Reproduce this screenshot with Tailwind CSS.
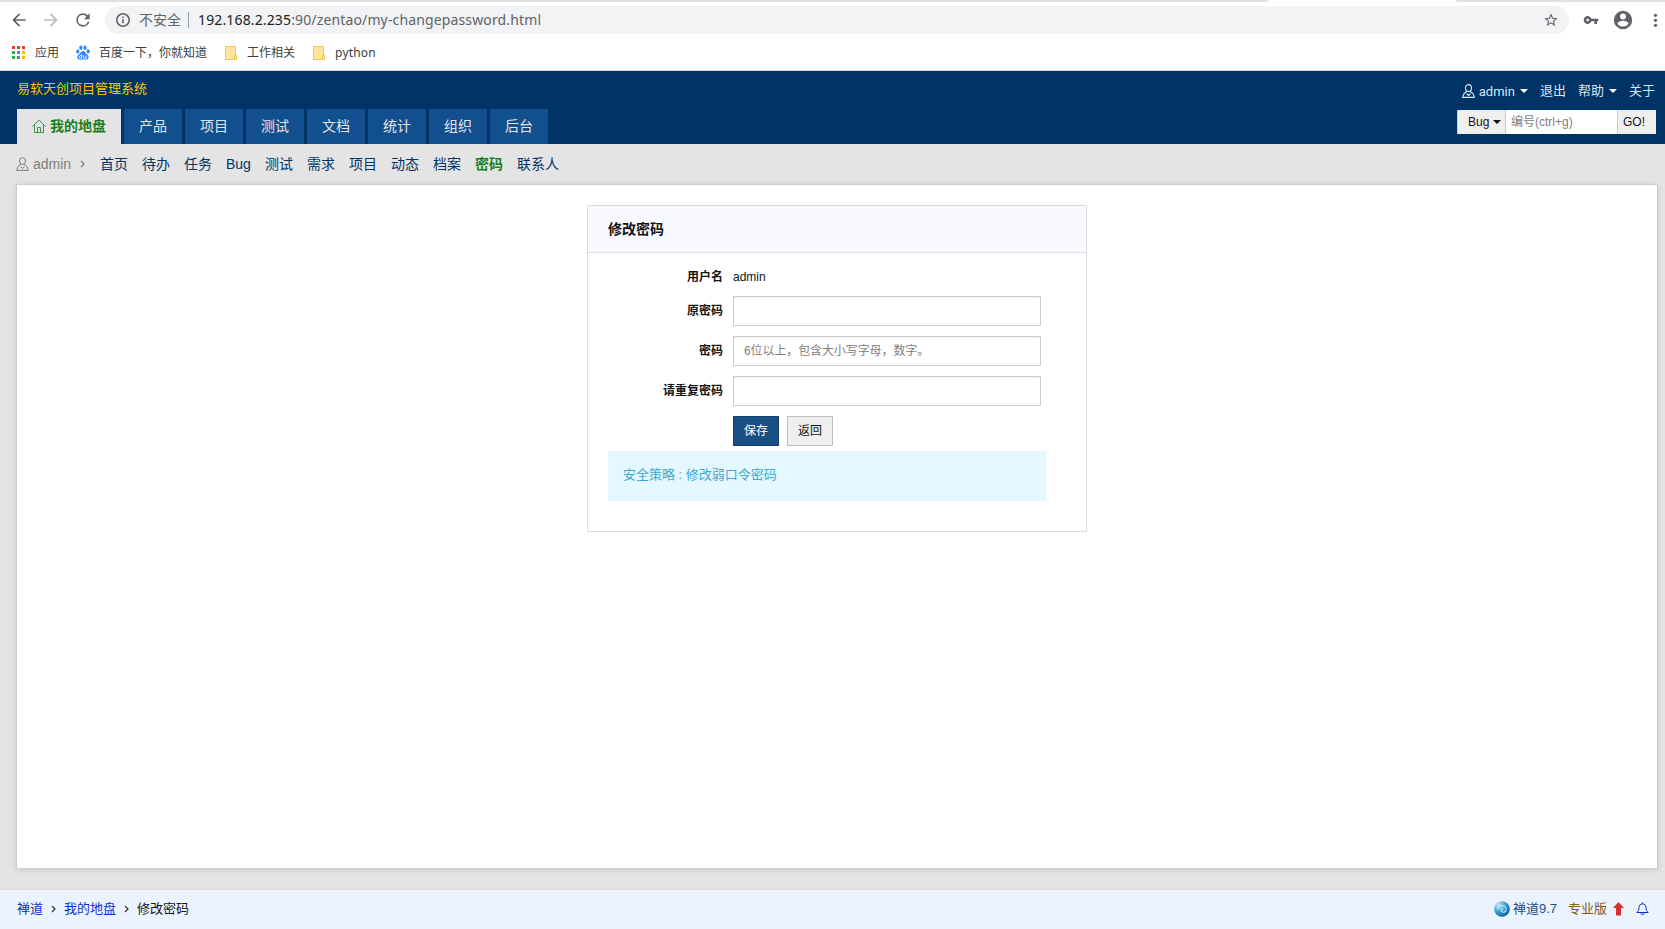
<!DOCTYPE html>
<html lang="zh-CN">
<head>
    <meta charset="UTF-8">
    <meta name="viewport" content="width=device-width, initial-scale=1.0">
    <title>修改密码 - 易软天创项目管理系统</title>
    <script src="https://cdn.jsdelivr.net/npm/@tailwindcss/browser@4"></script>
</head>
<body class="flex flex-col h-screen overflow-hidden bg-[#e4e4e4] text-[#141414] text-[13px] font-['Liberation_Sans','Noto_Sans_CJK_SC',sans-serif]">

    <!-- browser toolbar -->
    <div class="h-[71px] shrink-0 bg-white border-b border-[#d5d8dc] font-['Noto_Sans','Noto_Sans_CJK_SC',sans-serif]">
        <div class="flex h-[2px]">
            <div class="w-[1269px] bg-[#dee1e6] rounded-br-[2px]"></div>
            <div class="w-[187px]"></div>
            <div class="flex-1 bg-[#dee1e6] rounded-bl-[2px]"></div>
        </div>
        <div class="flex items-center h-9 pl-[9px] text-[#5f6368]">
            <svg class="w-5 h-5 mr-3" viewBox="0 0 24 24" fill="currentColor"><path d="M20 11H7.83l5.59-5.59L12 4l-8 8 8 8 1.41-1.41L7.83 13H20z"/></svg>
            <svg class="w-5 h-5 mr-3 text-[#babcbe]" viewBox="0 0 24 24" fill="currentColor"><path d="M12 4l-1.41 1.41L16.17 11H4v2h12.17l-5.58 5.59L12 20l8-8z"/></svg>
            <svg class="w-5 h-5 mr-3" viewBox="0 0 24 24" fill="currentColor"><path d="M17.65 6.35A7.96 7.96 0 0 0 12 4a8 8 0 1 0 7.73 10h-2.08A6 6 0 1 1 12 6c1.66 0 3.14.69 4.22 1.78L13 11h7V4z"/></svg>
            <div class="flex items-center w-[1464px] h-7 pl-[10px] pr-[10px] rounded-full bg-[#f1f3f4]">
                <svg class="w-4 h-4 mr-2" viewBox="0 0 16 16" fill="none" stroke="currentColor" stroke-width="1.6"><circle cx="8" cy="8" r="6.2"/><path d="M8 7.2v4M8 4.4v1.6"/></svg>
                <span class="text-[14px] leading-7">不安全</span>
                <span class="w-px h-4 ml-[7px] mr-[9px] bg-[#9aa0a6]"></span>
                <span class="flex-1 text-[14px] leading-7 tracking-[0.14px] whitespace-nowrap"><span class="text-[#202124]">192.168.2.235</span>:90/zentao/my-changepassword.html</span>
                <svg class="w-4 h-4" viewBox="0 0 24 24" fill="currentColor"><path d="M22 9.24l-7.19-.62L12 2 9.19 8.63 2 9.24l5.46 4.73L5.82 21 12 17.27 18.18 21l-1.63-7.03zM12 15.4l-3.76 2.27 1-4.28-3.32-2.88 4.38-.38L12 6.1l1.71 4.04 4.38.38-3.32 2.88 1 4.28z"/></svg>
            </div>
            <svg class="w-4 h-4 ml-[14px]" viewBox="0 0 24 24" fill="currentColor"><path d="M12.65 10A6 6 0 1 0 12.65 14H17v4h4v-4h2v-4zM7 14a2 2 0 1 1 0-4 2 2 0 0 1 0 4z"/></svg>
            <svg class="w-[22px] h-[22px] ml-[13px]" viewBox="0 0 24 24" fill="currentColor"><path d="M12 2a10 10 0 1 0 0 20 10 10 0 0 0 0-20zm0 3a3.2 3.2 0 1 1 0 6.4A3.2 3.2 0 0 1 12 5zm0 14.2a7.2 7.2 0 0 1-6-3.22c.03-1.99 4-3.08 6-3.08s5.97 1.09 6 3.08a7.2 7.2 0 0 1-6 3.22z"/></svg>
            <svg class="w-4 h-4 ml-[13px] mr-[2px]" viewBox="0 0 16 16" fill="currentColor"><circle cx="8.5" cy="3.3" r="1.6"/><circle cx="8.5" cy="8.3" r="1.6"/><circle cx="8.5" cy="13.3" r="1.6"/></svg>
        </div>
        <div class="flex items-center h-[29px] pl-3 text-[12px] text-[#3c4043]">
            <svg class="w-[13px] h-[13px] mr-[10px]" viewBox="0 0 13 13">
                <path fill="#ea4335" d="M0 0h3v3H0zM5 0h3v3H5zM10 0h3v3h-3z"/>
                <path fill="#34a853" d="M0 5h3v3H0zM0 10h3v3H0zM5 10h3v3H5z"/>
                <path fill="#4285f4" d="M5 5h3v3H5z"/>
                <path fill="#fbbc05" d="M10 5h3v3h-3zM10 10h3v3h-3z"/>
            </svg>
            <span class="mr-[17px]">应用</span>
            <svg class="w-[14px] h-[15px] mr-[9px]" viewBox="0 0 14 15" fill="#3385ff">
                <ellipse cx="1.8" cy="6.5" rx="1.6" ry="2.1"/><ellipse cx="4.8" cy="2.7" rx="1.6" ry="2.2"/><ellipse cx="9" cy="2.7" rx="1.6" ry="2.2"/><ellipse cx="12.2" cy="6.3" rx="1.6" ry="2.1"/>
                <path d="M7 6C5 6 4.6 8 3 9.3 1.4 10.5 1 12 1.6 13.3c.8 1.7 3 1.3 5.4 1.3s4.6.4 5.4-1.3c.6-1.3.2-2.8-1.4-4C9.4 8 9 6 7 6z"/>
                <path d="M5.7 9.2v4H4.6a1.3 1.3 0 0 1 0-2.6h1.1M7.6 10.5v2.1q0 .6.6.6h1.9v-2.7" fill="none" stroke="#fff" stroke-width=".9"/>
            </svg>
            <span class="mr-[18px]">百度一下，你就知道</span>
            <svg class="w-3 h-[14px] mr-[10px]" viewBox="0 0 12 14"><path d="M.5.5h10v9h1v4H.5z" fill="#ffe69a" stroke="#eec955"/><path d="M9.5 13V9.5h1" fill="none" stroke="#eec955"/></svg>
            <span class="mr-[18px]">工作相关</span>
            <svg class="w-3 h-[14px] mr-[10px]" viewBox="0 0 12 14"><path d="M.5.5h10v9h1v4H.5z" fill="#ffe69a" stroke="#eec955"/><path d="M9.5 13V9.5h1" fill="none" stroke="#eec955"/></svg>
            <span class="tracking-[0.2px]">python</span>
        </div>
    </div>

    <!-- header -->
    <header class="flex justify-between h-[73px] shrink-0 pl-[17px] pr-[9px] bg-[#003366]">
        <div class="flex flex-col justify-between">
            <h1 class="h-9 leading-[35px] text-[13px] text-[#ffc600]">易软天创项目管理系统</h1>
            <nav class="flex gap-[3px] text-[14px] leading-[34px] text-[#e5e5e5] *:h-[35px]">
                <a class="flex items-center w-[104px] pl-[15px] pb-[2px] bg-[#e4e4e4] font-bold text-[#1a7f1a]">
                    <svg class="w-[14px] h-[14px] mr-1" viewBox="0 0 14 14" fill="none" stroke="#3c944a" stroke-width="1"><path d="M.5 7.5L7 .9l6.5 6.6M2.5 6v7.5h9V6M5.5 13.5v-5h3v5"/></svg>
                    我的地盘
                </a>
                <a class="w-[58px] text-center bg-[#114f8e]">产品</a>
                <a class="w-[58px] text-center bg-[#114f8e]">项目</a>
                <a class="w-[58px] text-center bg-[#114f8e]">测试</a>
                <a class="w-[58px] text-center bg-[#114f8e]">文档</a>
                <a class="w-[58px] text-center bg-[#114f8e]">统计</a>
                <a class="w-[58px] text-center bg-[#114f8e]">组织</a>
                <a class="w-[58px] text-center bg-[#114f8e]">后台</a>
            </nav>
        </div>
        <div class="flex flex-col items-end">
            <div class="flex items-center h-[39px] pr-px text-[#d6e6f5] leading-[39px]">
                <svg class="w-[13px] h-[14px] mr-[4px]" viewBox="0 0 13 14" fill="none" stroke="currentColor" stroke-width="1.1"><ellipse cx="6.5" cy="4" rx="3" ry="3.4"/><path d="M5 7L1.7 10 .7 13.4h11.6l-1-3.4L8 7M4.5 9.5l2 2 2-2"/></svg>
                <span class="pt-px font-['Roboto']">admin</span>
                <span class="ml-[5px] mr-3 border-x-4 border-t-4 border-x-transparent border-t-white"></span>
                <span class="mr-3">退出</span>
                <span>帮助</span>
                <span class="ml-[5px] mr-3 border-x-4 border-t-4 border-x-transparent border-t-white"></span>
                <span>关于</span>
            </div>
            <div class="flex w-[199px] h-6 text-[12px] leading-[22px]">
                <button class="flex items-center w-[48px] pl-[10px] bg-[#efefef] border-l border-[#ccc]">Bug<span class="ml-1 border-x-4 border-t-4 border-x-transparent border-t-[#141414]"></span></button>
                <input type="text" class="w-[113px] h-6 px-[5px] bg-white border-x border-[#ccc] placeholder:text-[#808080]" placeholder="编号(ctrl+g)">
                <button class="flex-1 pl-[5px] text-left bg-[#efefef]">GO!</button>
            </div>
        </div>
    </header>

    <!-- module menu -->
    <nav class="flex items-center gap-[14px] h-10 shrink-0 pl-4 text-[14px] text-[#003366]">
        <span class="flex items-center w-[70px] text-[#808080]">
            <svg class="w-[13px] h-[14px] mr-1" viewBox="0 0 13 14" fill="none" stroke="currentColor" stroke-width="1"><ellipse cx="6.5" cy="4" rx="3" ry="3.4"/><path d="M5 7L1.7 10 .7 13.4h11.6l-1-3.4L8 7M4.5 9.5l2 2 2-2"/></svg>
            admin
            <svg class="w-[5px] h-[8px] ml-[9px]" viewBox="0 0 5 8" fill="none" stroke="currentColor" stroke-width="1.3"><path d="M1 1l3 3-3 3"/></svg>
        </span>
        <a>首页</a>
        <a>待办</a>
        <a>任务</a>
        <a>Bug</a>
        <a>测试</a>
        <a>需求</a>
        <a>项目</a>
        <a>动态</a>
        <a>档案</a>
        <a class="font-bold text-[#1a7f1a]">密码</a>
        <a>联系人</a>
    </nav>

    <!-- content -->
    <main class="h-[685px] shrink-0 ml-4 mr-[7px] pt-5 bg-white border border-[#ccc] shadow-[0_1px_6px_rgba(0,0,0,0.12)]">
        <div class="w-[500px] h-[327px] mx-auto border border-[#ddd]">
            <div class="h-[47px] px-5 leading-[46px] bg-[#f8faff] border-b border-[#ddd] text-[14px] font-bold">修改密码</div>
            <form class="grid grid-cols-[115px_308px] gap-[10px] pt-[13px] pl-5 text-[12px]">
                <label class="h-5 text-right font-bold leading-[22px]">用户名</label>
                <div class="h-5 leading-[22px]">admin</div>
                <label class="text-right font-bold leading-[30px]">原密码</label>
                <input type="password" class="h-[30px] border border-[#ccc] shadow-[inset_0_1px_1px_rgba(0,0,0,0.075)]">
                <label class="text-right font-bold leading-[30px]">密码</label>
                <input type="text" class="h-[30px] px-[10px] border border-[#ccc] shadow-[inset_0_1px_1px_rgba(0,0,0,0.075)] tracking-[-0.1px] placeholder:text-[#808080]" placeholder="6位以上，包含大小写字母，数字。">
                <label class="text-right font-bold leading-[30px]">请重复密码</label>
                <input type="password" class="h-[30px] border border-[#ccc] shadow-[inset_0_1px_1px_rgba(0,0,0,0.075)]">
                <div class="col-start-2 flex gap-2">
                    <button type="button" class="w-[46px] h-[30px] bg-[#1a4f85] border border-[#164270] text-white">保存</button>
                    <button type="button" class="w-[46px] h-[30px] bg-[#efefef] border border-[#bfbfbf]">返回</button>
                </div>
            </form>
            <div class="w-[438px] h-[50px] mt-[5px] ml-5 pl-[15px] leading-[48px] bg-[#e5f8ff] text-[#39a9d0]">安全策略 : 修改弱口令密码</div>
        </div>
    </main>

    <!-- footer -->
    <footer class="flex items-center justify-between flex-1 mt-5 pl-[17px] pr-4 pb-px border-t border-[#ddd] bg-[#ebf3ff]">
        <div class="flex items-center">
            <a class="text-[#0c31cf]">禅道</a>
            <svg class="w-[5px] h-[8px] mx-2" viewBox="0 0 5 8" fill="none" stroke="#333" stroke-width="1.2"><path d="M1 1l3 3-3 3"/></svg>
            <a class="text-[#0c31cf]">我的地盘</a>
            <svg class="w-[5px] h-[8px] mx-2" viewBox="0 0 5 8" fill="none" stroke="#333" stroke-width="1.2"><path d="M1 1l3 3-3 3"/></svg>
            <span>修改密码</span>
        </div>
        <div class="flex items-center">
            <svg class="w-4 h-4 mr-[3px]" viewBox="0 0 16 16">
                <defs><radialGradient id="ball" cx=".3" cy=".25" r=".85"><stop offset="0" stop-color="#c8eaf5"/><stop offset=".5" stop-color="#3e9fd0"/><stop offset="1" stop-color="#0b568f"/></radialGradient></defs>
                <circle cx="8" cy="8" r="7.8" fill="url(#ball)"/>
                <path d="M3 8.5c1.500-4 6-5 8.500-2.500 2 2.700 0 6-3 5-2-.8-1.300-3.300.8-2.800" fill="none" stroke="#b5e0f2" stroke-width="1.2"/>
            </svg>
            <a class="mr-[11px] text-[#1a4f85]">禅道9.7</a>
            <a class="text-[#8a5a12]">专业版</a>
            <svg class="w-[11px] h-[14px] ml-[6px] mr-[12px]" viewBox="0 0 11 14" fill="#d2322d"><path d="M5.5 0L11 6H8v8l-1-1-1 1-1-1-1 1-1-1V6H0z"/></svg>
            <svg class="w-[13px] h-[14px]" viewBox="0 0 13 14" fill="none" stroke="#0c31cf" stroke-width="1"><path d="M6.5.3v1.4M.8 10.5c1.7-1.5 2.2-2.8 2.2-5C3 3.3 4.5 1.9 6.5 1.9S10 3.3 10 5.5c0 2.2.5 3.5 2.2 5zM5 11.2c.2 2 2.8 2 3 0"/></svg>
        </div>
    </footer>

</body>
</html>
